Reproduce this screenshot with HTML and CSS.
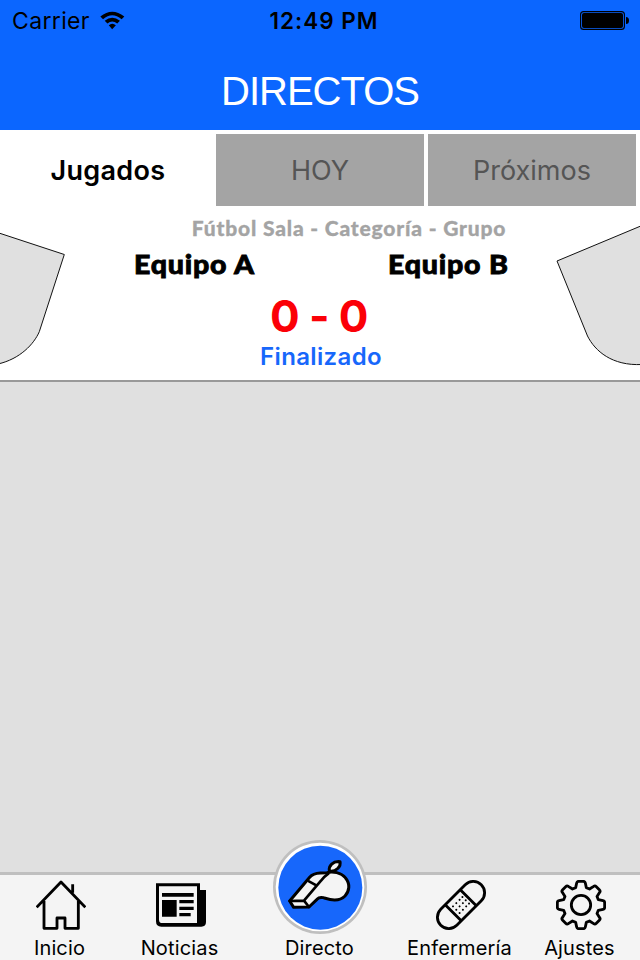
FILE: index.html
```html
<!DOCTYPE html>
<html lang="es">
<head>
<meta charset="utf-8">
<title>Directos</title>
<link rel="stylesheet" href="styles.css">
</head>
<body>
<div class="app">
  <header class="header">
    <div class="status">
      <div class="carrier"><span>Carrier</span>
        <svg class="wifi" viewBox="302 32 74 56"><path d="M303 48Q338 20 374 48L366 56Q338 33 311 56ZM316 61Q338 42 361 61L353 69Q338 57 324 69ZM328 74Q338 65 349 74L338 86Z"/></svg>
      </div>
      <div class="clock">12:49 PM</div>
      <svg class="battery" viewBox="0 0 49 19"><rect x=".6" y=".6" width="43.8" height="17.8" rx="3" fill="none" stroke="#000" stroke-width="1.1"/><rect x="2" y="2" width="41" height="15" rx="2"/><path d="M46 6q3 0 3 3.5T46 13z"/></svg>
    </div>
    <h1 class="title">DIRECTOS</h1>
  </header>
  <nav class="tabs">
    <div class="tab active"><span>Jugados</span></div>
    <div class="tab hoy"><span>HOY</span></div>
    <div class="tab next"><span>Próximos</span></div>
  </nav>
  <section class="match">
    <svg class="shirt" viewBox="0 206 84 174"><path d="M-2 232.7L64.3 254.5L39.3 331.7C34 344 20 359 -2 364"/></svg>
    <div class="info">
      <div class="category"><span>Fútbol Sala - Categoría - Grupo</span></div>
      <div class="teams"><span>Equipo A</span><span>Equipo B</span></div>
      <div class="score"><span>0 - 0</span></div>
      <div class="state"><span>Finalizado</span></div>
    </div>
    <svg class="shirt" viewBox="556 206 84 174"><path d="M642 225.5L557 261L587.5 336C595 351 612 366 642 364.5"/></svg>
  </section>
  <main class="content"></main>
  <footer class="bar">
    <div class="item inicio">
      <svg class="icon" viewBox="108 60 150 150"><path class="line" d="M110 142L183 66L256 142M132 123V205H171V174H195V205H235V123M218 73V98"/></svg>
      <span>Inicio</span>
    </div>
    <div class="item noticias">
      <svg class="icon" viewBox="468 60 150 150"><path d="M596 90H618V186Q618 200 604 200H484Q468 200 468 184V70H600V90Z"/><path fill="#f4f4f4" d="M477 79H591V189H487Q477 189 477 179Z"/><path d="M486 99H581V110H486ZM486 120H530V170H486ZM538 120H581V130H538ZM538 140H581V150H538ZM538 159H572V169H538Z"/></svg>
      <span>Noticias</span>
    </div>
    <div class="item directo">
      <svg class="badge" viewBox="37 16 282 282"><circle cx="178" cy="157" r="141" fill="#bfbfbf"/><circle cx="178" cy="157" r="133" fill="#fff"/><circle cx="179" cy="159" r="126" fill="#1767fb"/>
        <g transform="translate(-4 1)" fill="#f4f4f4" stroke="#000" stroke-width="9" stroke-linejoin="round" stroke-linecap="round"><path d="M91 198L151 127Q161 115 183 114L203 113C220 108 246 113 258 128C274 147 270 169 257 183C237 203 209 193 192 188Q180 185 173 193L149 216L103 217Z"/><path fill="none" stroke-width="8" d="M91 198L134 197L149 216M134 197L185 137Q193 126 207 116M149 139L171 151"/><path d="M210 107C208 92 220 78 242 80C246 95 229 110 214 109Z"/></g></svg>
      <span>Directo</span>
    </div>
    <div class="item enfermeria">
      <svg class="icon" viewBox="108 60 150 150"><g transform="translate(183 135) rotate(-45)"><rect class="line" x="-86" y="-34" width="172" height="68" rx="34"/><path class="line" d="M31 -33V33M-33 -33V33"/><path class="dots" d="M-20 -14h.1M-6 -14h.1M8 -14h.1M20 -14h.1M-20 0h.1M-6 0h.1M8 0h.1M20 0h.1M-20 14h.1M-6 14h.1M8 14h.1M20 14h.1"/></g></svg>
      <span>Enfermería</span>
    </div>
    <div class="item ajustes">
      <svg class="icon" viewBox="-75 -75 150 150"><path class="line" d="M-16 -52L-13 -66Q-12 -71 -7 -71H7Q12 -71 13 -66L16 -52L25.5 -48.1L38 -56Q42 -59 46 -55L55 -46Q59 -42 56 -38L48.1 -25.5L52 -16L66 -13Q71 -12 71 -7V7Q71 12 66 13L52 16L48.1 25.5L56 38Q59 42 55 46L46 55Q42 59 38 56L25.5 48.1L16 52L13 66Q12 71 7 71H-7Q-12 71 -13 66L-16 52L-25.5 48.1L-38 56Q-42 59 -46 55L-55 46Q-59 42 -56 38L-48.1 25.5L-52 16L-66 13Q-71 12 -71 7V-7Q-71 -12 -66 -13L-52 -16L-48.1 -25.5L-56 -38Q-59 -42 -55 -46L-46 -55Q-42 -59 -38 -56L-25.5 -48.1Z"/><circle class="line" r="29"/></svg>
      <span>Ajustes</span>
    </div>
  </footer>
</div>
</body>
</html>
```
FILE: styles.css
```css
* { box-sizing: border-box; }
body { margin: 0; font-family: Inter, "Liberation Sans", sans-serif; color: #000; }
svg { display: block; flex: none; }
span { white-space: nowrap; }
.app { width: 640px; height: 960px; display: flex; flex-direction: column; background: #fff; overflow: hidden; }
.header { height: 130px; background: #0b66ff; }
.status { height: 41px; padding: 0 11px 0 12px; display: grid; grid-template-columns: 1fr auto 1fr; align-items: center; }
.carrier { display: flex; align-items: center; gap: 10px; font-size: 23px; letter-spacing: .35px; }
.wifi { width: 25px; height: 19px; }
.clock { font-size: 22.5px; font-weight: 600; letter-spacing: 1px; padding-left: 7px; }
.battery { width: 49px; height: 19px; justify-self: end; }
.title { margin: 0; height: 89px; padding-top: 11px; line-height: 78px; text-align: center; color: #fff; font-family: "Liberation Sans", sans-serif; font-weight: 400; font-size: 40px; letter-spacing: -1px; }
.tabs { height: 76px; padding: 4px 4px 0; display: grid; grid-template-columns: repeat(3, 1fr); gap: 4px; }
.tab { display: flex; align-items: center; justify-content: center; background: #a4a4a4; color: #555; font-size: 27px; }
.tab.active { background: #fff; color: #000; font-weight: 600; letter-spacing: .3px; }
.match { height: 176px; display: flex; border-bottom: 2px solid #999; }
.shirt { width: 84px; height: 174px; }
.shirt path { fill: #e0e0e0; stroke: #111; stroke-width: 1; }
.info { flex: 1; text-align: center; }
.category { padding-left: 58px; height: 43px; font: 900 21px/44px Lato, sans-serif; letter-spacing: .82px; color: #a4a4a4; -webkit-text-stroke: .3px #a4a4a4; }
.teams { display: grid; grid-template-columns: 254px 1fr; padding-left: 50px; text-align: left; font: 900 26px/30px Lato, sans-serif; letter-spacing: .7px; -webkit-text-stroke: .8px #000; }
.teams span { justify-self: start; transform: scaleX(1.1); transform-origin: left; }
.score { height: 59px; line-height: 74px; font-size: 44px; font-weight: 700; letter-spacing: -.6px; color: #fb0007; }
.score span { margin-right: 2px; }
.state { line-height: 38px; font-size: 24px; font-weight: 600; letter-spacing: .35px; color: #1767fb; padding-left: 2px; }
.content { flex: 1; background: #e0e0e0; }
.bar { height: 88px; border-top: 3px solid #bfbfbf; background: #f4f4f4; display: grid; grid-template-columns: 120px 120px 160px 120px 120px; }
.item { height: 85px; display: flex; flex-direction: column; align-items: center; justify-content: flex-end; gap: 6px; font-size: 20px; line-height: 24px; letter-spacing: .15px; }
.item span { margin-right: 1px; }
.icon { width: 50px; height: 50px; margin-left: 2px; }
.badge { width: 94px; height: 94px; margin: 0 1px -4px 0; }
.line { fill: none; stroke: #000; stroke-width: 8.5; stroke-linejoin: round; stroke-linecap: butt; }
.dots { fill: none; stroke: #000; stroke-width: 6; stroke-linecap: round; }
```
